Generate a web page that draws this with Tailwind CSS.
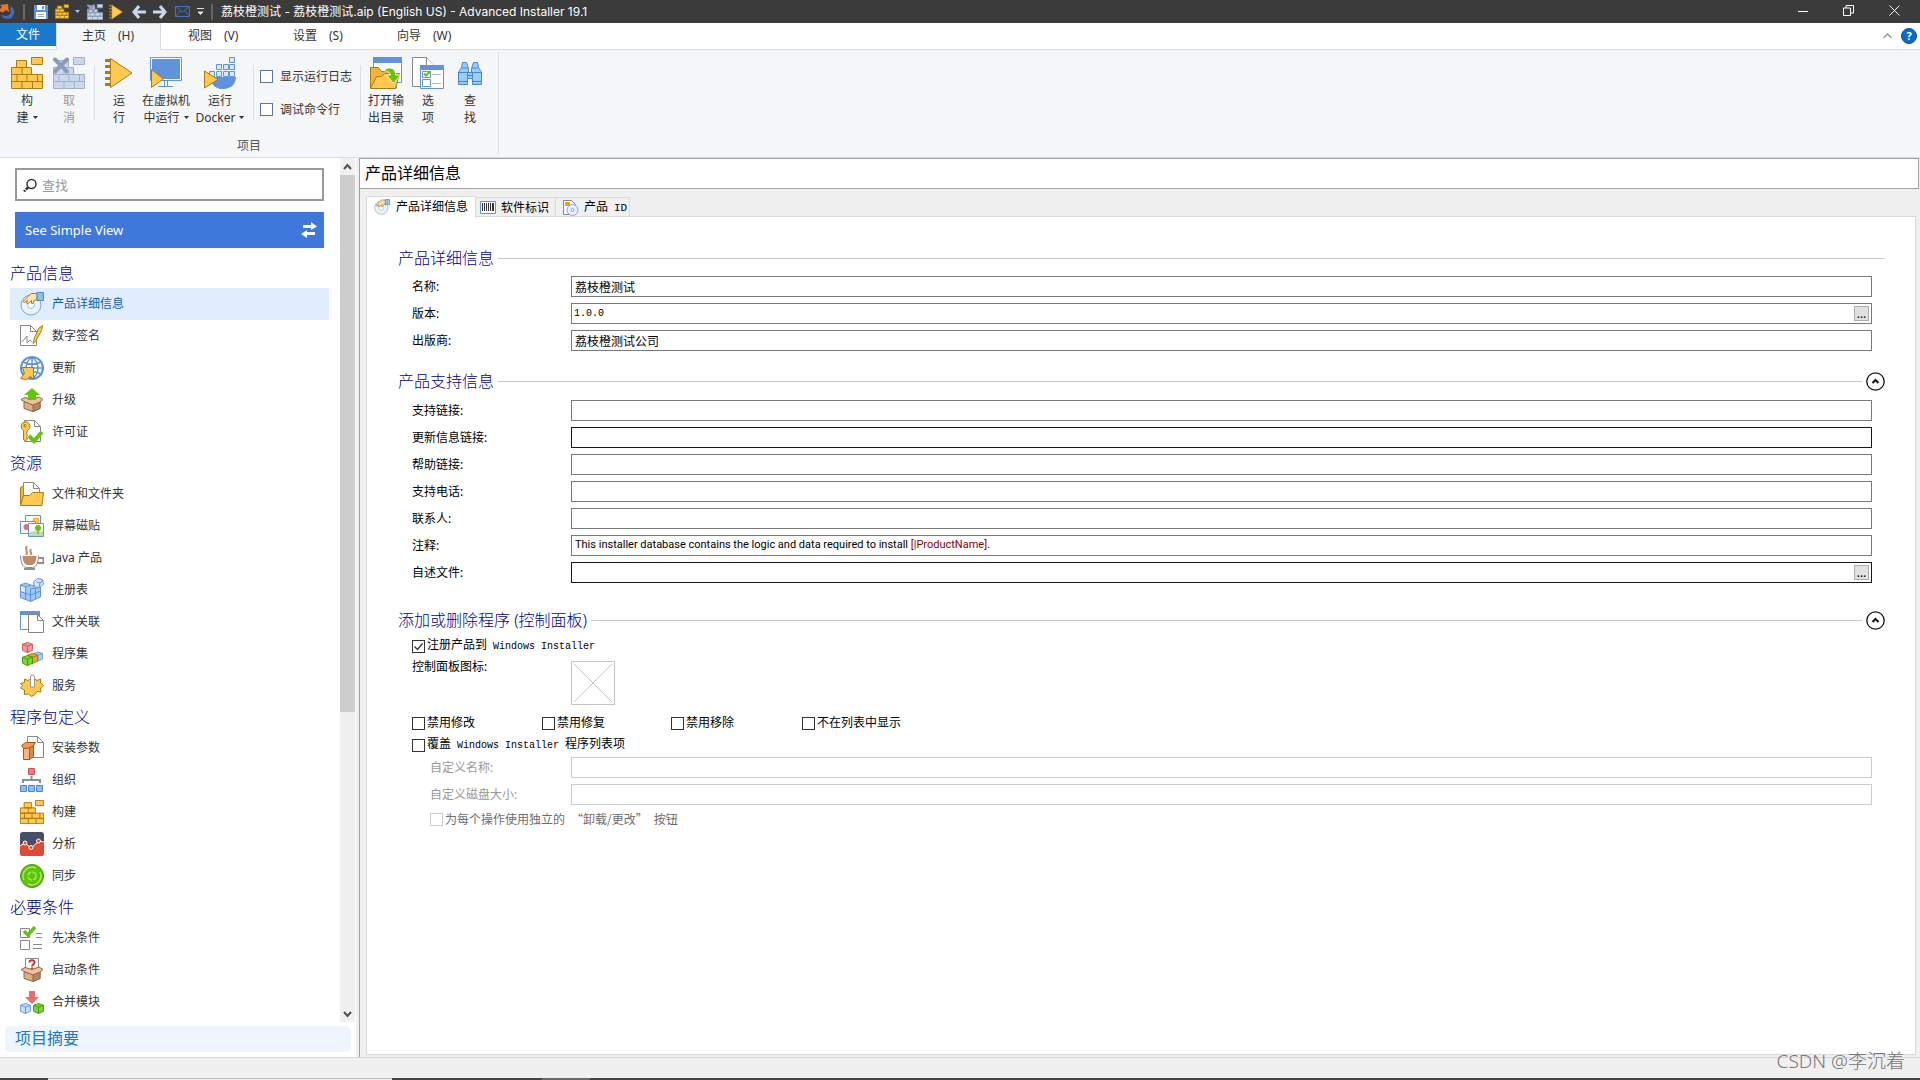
<!DOCTYPE html>
<html lang="zh-CN">
<head>
  <meta charset="UTF-8" />
  <meta name="viewport" content="width=device-width, initial-scale=1.0" />
  <title>荔枝橙测试 - Advanced Installer 19.1</title>
  <script src="https://cdn.jsdelivr.net/npm/@tailwindcss/browser@4"></script>
</head>
<body class="h-screen overflow-hidden flex flex-col bg-[#f0f0f0] text-black text-[12px] leading-4 font-['Noto_Sans','Noto_Sans_CJK_SC',sans-serif]">

  <!-- Shared icons -->
  <svg class="hidden">
    <symbol id="bricks" viewBox="0 0 32 32">
      <path d="M20.5.5h11v7h-11zM5.5 3.5h10v7h-10zM.5 10.5h20v7H.5zM.5 17.5h31v7H.5zM.5 24.5h31v7H.5zM11 10.5v7M6 17.5v7M16 17.5v7M26.5 17.5v7M11 24.5v7M21.5 24.5v7" />
    </symbol>
    <symbol id="cross" viewBox="0 0 32 32">
      <path d="M2 2.500l12 12M14 2.500l-12 12" fill="none" stroke="#8c9cb8" stroke-width="4" stroke-linecap="round" />
    </symbol>
    <symbol id="run" viewBox="0 0 32 32">
      <path d="M5.500 1.500v29l21.500-14.500z" fill="#ffc94f" stroke="#a87b14" />
      <path d="M0 3.500h5M0 9.500h5M0 15.500h5M0 21.500h5M0 27.500h5" stroke="#a87b14" stroke-width="3" />
    </symbol>
    <symbol id="disc" viewBox="0 0 24 24">
      <circle cx="11" cy="13" r="10" fill="#e9f3fd" stroke="#7da7dc" />
      <circle cx="11" cy="13" r="3.500" fill="#fff" stroke="#9dbde4" />
      <path d="M17 1.500h-6l-8 8 1.500 1 3-2-1 2.500 2 .5 3-3v3h1.500l1.500-3.500h2.500z" fill="#ffe3ae" stroke="#b07b1c" />
      <path d="M17 .5h6.500v8H17z" fill="#8fbdf3" stroke="#4c86d0" />
    </symbol>
    <symbol id="box" viewBox="0 0 24 24">
      <path d="M4 13.500l9 3 7-3v7l-7 3-9-3z" fill="#dcae82" stroke="#8d6748" />
      <path d="M13 16.500v7l7-3v-7z" fill="#b9865c" stroke="#8d6748" />
      <path d="M4 13.500l-3-2 4-2 7 2 7-2.500 4 2.500-3 2.500-7 3z" fill="#eac39c" stroke="#8d6748" />
    </symbol>
    <symbol id="cube" viewBox="0 0 12 12">
      <path d="M.5 2.500L6 .5l5.500 2v6.500L6 11.500.5 9z" />
      <path d="M.5 2.500L6 4.500l5.500-2M6 4.500v7" fill="none" />
    </symbol>
    <symbol id="caret" viewBox="0 0 5 3"><path d="M0 0h5L2.500 3z" fill="currentColor" /></symbol>
  </svg>

  <!-- Title bar -->
  <header class="h-[23px] shrink-0 flex items-center bg-[#3b3b3b] text-white">
    <svg class="w-4 h-4" viewBox="0 0 16 16"><path d="M1 11a7 7 0 0 0 13-1c1-3 0-6-3-8l-1 4c2 3-1 6-4 6-2 0-3-1-5-1z" fill="#3d6db8" /><path d="M0 1l8-1 1 8-3-2-3 2.500-3-1V5l2-2z" fill="#e8732a" /></svg>
    <div class="ml-[7px] w-[2px] h-4 border-x border-[#666]"></div>
    <button aria-label="保存" class="ml-[9px]"><svg class="w-[14px] h-[14px]" viewBox="0 0 14 14"><path d="M0 0h14v14H0z" fill="#5a93e0" /><path d="M3 0h8v5H3zM2 7h10v7H2z" fill="#fff" /><path d="M4 9.500h6M4 11.500h6" stroke="#9ab" /><path d="M8 1h2v3H8z" fill="#5a93e0" /></svg></button>
    <button aria-label="构建" class="ml-[7px]"><svg class="w-[14px] h-[15px]" fill="#ffc94f" stroke="#a87b14" stroke-width="2"><use href="#bricks" /></svg></button>
    <button aria-label="构建选项" class="ml-[6px] text-[#9cc4f5]"><svg class="w-[5px] h-[3px]"><use href="#caret" /></svg></button>
    <button aria-label="取消" class="ml-[7px]"><svg class="w-4 h-4" fill="#ccd8ea" stroke="#8c9cb8" stroke-width="2"><use href="#bricks" /><use href="#cross" /></svg></button>
    <button aria-label="运行" class="ml-[6px]"><svg class="w-4 h-4"><use href="#run" /></svg></button>
    <button aria-label="后退" class="ml-[7px]"><svg class="w-[14px] h-[14px]" viewBox="0 0 14 14"><path d="M7 1L2 7l5 6M2 7h12" fill="none" stroke="#c8d8f0" stroke-width="3" /></svg></button>
    <button aria-label="前进" class="ml-[7px]"><svg class="w-[14px] h-[14px]" viewBox="0 0 14 14"><path d="M7 1l5 6-5 6M12 7H0" fill="none" stroke="#c8d8f0" stroke-width="3" /></svg></button>
    <button aria-label="邮件" class="ml-2"><svg class="w-[15px] h-[11px]" viewBox="0 0 15 11"><path d="M.5.5h14v10H.5zM.5.5L7.500 6l7-5.500M.5 10.500l5-6M14.500 10.500l-5-6" fill="none" stroke="#3f73bd" /></svg></button>
    <button aria-label="自定义工具栏" class="ml-[7px]"><svg class="w-[7px] h-2" viewBox="0 0 7 8"><path d="M0 .5h7M1 4h5L3.500 6.500z" fill="#ddd" stroke="#ddd" stroke-width="1" /></svg></button>
    <div class="ml-[7px] w-[2px] h-4 border-x border-[#666]"></div>
    <h1 class="ml-2 flex-1 whitespace-nowrap font-['Inter','Noto_Sans_CJK_SC',sans-serif]">荔枝橙测试 - 荔枝橙测试.aip (English US) - Advanced Installer 19.1</h1>
    <div class="flex gap-[35px] pr-[20px] pb-[3px]">
      <button aria-label="最小化"><svg class="w-[11px] h-[11px]" viewBox="0 0 11 11"><path d="M1 6.500h10" stroke="#fff" /></svg></button>
      <button aria-label="还原"><svg class="w-[11px] h-[11px]" viewBox="0 0 11 11"><path d="M.5 3h7v7.500h-7zM3 3V.5h7.500V8h-3" fill="none" stroke="#fff" /></svg></button>
      <button aria-label="关闭"><svg class="w-[11px] h-[11px]" viewBox="0 0 11 11"><path d="M.5.5l10 10M10.500.5l-10 10" stroke="#fff" /></svg></button>
    </div>
  </header>

  <!-- Ribbon tabs -->
  <nav class="h-[27px] shrink-0 flex items-start bg-white border-b border-[#d9dbde] text-[#333]">
    <a href="#" class="w-[56px] h-[23px] pt-[4px] text-center bg-[#1979ca] text-white">文件</a>
    <a href="#" class="w-[105px] h-[27px] pt-[4px] pl-[25px] bg-[#f5f6f8] border-x border-t border-[#d9dbde]">主页&emsp;(H)</a>
    <a href="#" class="w-[106px] pt-[5px] pl-[27px]">视图&emsp;(V)</a>
    <a href="#" class="w-[104px] pt-[5px] pl-[26px]">设置&emsp;(S)</a>
    <a href="#" class="pt-[5px] pl-[26px]">向导&emsp;(W)</a>
    <div class="ml-auto h-[26px] pr-[3px] flex items-center gap-[9px]">
      <button aria-label="折叠功能区"><svg class="w-[9px] h-[6px]" viewBox="0 0 9 6"><path d="M.5 5l4-4 4 4" fill="none" stroke="#999" stroke-width="1.500" /></svg></button>
      <button aria-label="帮助" class="w-4 h-4 rounded-full bg-[#0a6bc9] border border-[#0b4f98] text-white text-[11px] leading-[14px] font-bold">?</button>
    </div>
  </nav>

  <!-- Ribbon -->
  <section class="h-[108px] shrink-0 flex bg-[#f5f6f8] border-b border-[#d9dbde] text-[#333] leading-[17px]">
    <div class="w-[499px] mt-[2px] mb-[3px] pt-[5px] border-r border-[#dcdee1] flex flex-col justify-between">
      <div class="flex pl-[6px] text-center">
        <button class="w-[42px]">
          <svg class="w-8 h-8 mx-auto mb-[3px]" fill="#ffc94f" stroke="#a87b14"><use href="#bricks" /></svg>
          构<br><span class="flex items-center justify-center gap-1">建<svg class="w-[5px] h-[3px]"><use href="#caret" /></svg></span>
        </button>
        <button disabled class="w-[42px] text-[#999]">
          <svg class="w-8 h-8 mx-auto mb-[3px]" fill="#ccd8ea" stroke="#9fb0cd"><use href="#bricks" /><use href="#cross" /></svg>
          取<br>消
        </button>
        <div class="ml-[4px] mt-2 w-px h-[55px] bg-[#dcdee1]"></div>
        <button class="w-[48px]">
          <svg class="w-8 h-8 mx-auto mb-[3px]"><use href="#run" x="2" /></svg>
          运<br>行
        </button>
        <button class="w-[50px] -ml-[2px] whitespace-nowrap">
          <svg class="w-8 h-8 mx-auto mb-[3px]" viewBox="0 0 32 32"><path d="M.5.5h31v23H.5z" fill="#fff" stroke="#5f93dc" /><path d="M2 2h28v20H2z" fill="#5f93dc" /><path d="M14.500 24v5M17.500 24v5M8 29.500h15" stroke="#5f93dc" /><path d="M1.500 12.500v18L13.500 22z" fill="#ffc94f" stroke="#a87b14" /></svg>
          在虚拟机<br><span class="flex items-center justify-center gap-1">中运行<svg class="w-[5px] h-[3px]"><use href="#caret" /></svg></span>
        </button>
        <button class="w-[58px]">
          <svg class="w-8 h-8 mx-auto mb-[3px]" viewBox="0 0 32 32"><path d="M5.500 14.500h5v5h-5zM12.500 14.500h5v5h-5zM19.500 14.500h5v5h-5zM25.500 14.500h5v5h-5zM12.500 7.500h5v5h-5zM19.500 7.500h5v5h-5zM25.500 7.500h5v5h-5zM25.500.5h5v5h-5z" fill="#d9e9fc" stroke="#5f93dc" /><path d="M8 20h24c0 7-5 12-13 12-5 0-9-2-11-6z" fill="#5f93dc" /><path d="M.5 14v17L14 22.500z" fill="#ffc94f" stroke="#a87b14" /></svg>
          运行<br><span class="flex items-center justify-center gap-1">Docker<svg class="w-[5px] h-[3px] shrink-0"><use href="#caret" /></svg></span>
        </button>
        <div class="mt-2 ml-1 w-px h-[55px] bg-[#dcdee1]"></div>
        <div class="w-[106px] pl-[6px] pt-[11px] flex flex-col gap-4 text-left whitespace-nowrap">
          <label class="flex items-center gap-[7px]"><input type="checkbox" class="appearance-none w-[13px] h-[13px] bg-white border border-[#5a76a8]">显示运行日志</label>
          <label class="flex items-center gap-[7px]"><input type="checkbox" class="appearance-none w-[13px] h-[13px] bg-white border border-[#5a76a8]">调试命令行</label>
        </div>
        <div class="mt-2 w-px h-[55px] bg-[#dcdee1]"></div>
        <button class="w-[42px] ml-[4px]">
          <svg class="w-8 h-8 mx-auto mb-[3px]" viewBox="0 0 32 32"><path d="M3.500.5h28v25h-28z" fill="#fff" stroke="#5f93dc" /><path d="M3 0h29v6H3z" fill="#5f93dc" /><path d="M.5 31V10.500h8l3 4h9V18L26.500 31z" fill="#f0b53a" stroke="#a87b14" /><path d="M.5 31.500l6-12h5l3-3h15l-4 15z" fill="#ffc94f" stroke="#a87b14" /><path d="M14 14c3-5 12-4 11.500 4h5l-7 8.500-7-8.500h4c0-3-3-4-6.500-4z" fill="#64c30e" stroke="#fff" stroke-width=".8" /></svg>
          打开输<br>出目录
        </button>
        <button class="w-[42px]">
          <svg class="w-8 h-8 mx-auto mb-[3px]" viewBox="0 0 32 32"><path d="M.5.5h14l7 8v21H.5z" fill="#fff" stroke="#888" /><path d="M14.500.5v8h7" fill="#fff" stroke="#888" /><path d="M8.500 8.500h23v23h-23z" fill="#fff" stroke="#5f93dc" /><path d="M8 8h24v5H8z" fill="#5f93dc" /><path d="M10.500 14.500h8v6h-8zM10.500 22.500h8v7h-8z" fill="#fff" stroke="#5f93dc" /><path d="M12 16.500l2 2 4-4" fill="none" stroke="#64c30e" stroke-width="2" /><path d="M20 17.500h9M20 26.500h9" stroke="#bbb" /></svg>
          选<br>项
        </button>
        <button class="w-[42px]">
          <svg class="w-8 h-8 mx-auto mb-[3px]" viewBox="0 0 32 32"><path d="M8.500 5.500h4l2 6v4h3v-4l2-6h4l1 5 3 5v12h-9v-6h-5v6h-9v-12l3-5z" fill="#9accff" stroke="#4a84cc" /><path d="M8 11h6M18 11h6M4.500 15.500h23M4.500 24.500h9M18.500 24.500h9M13.500 15v6M18.500 15v6M13.500 18.500h5" fill="none" stroke="#4a84cc" /></svg>
          查<br>找
        </button>
      </div>
      <div class="text-center text-[#555]">项目</div>
    </div>
  </section>

  <div class="flex-1 min-h-0 flex">
    <!-- Sidebar -->
    <aside class="w-[359px] shrink-0 flex flex-col pr-[3px]">
      <div class="flex-1 min-h-0 flex bg-white">
        <div class="w-[340px] overflow-hidden pt-[10px] pl-[10px] pr-[11px]">
          <div class="ml-[5px] mr-[5px] h-[33px] flex items-center gap-[5px] pl-[6px] border-2 border-[#999]">
            <svg class="w-[14px] h-[14px]" viewBox="0 0 14 14"><circle cx="8.500" cy="6" r="4.500" fill="none" stroke="#333" stroke-width="1.500" /><path d="M5 9.500L1 13.500" stroke="#333" stroke-width="2.500" stroke-dasharray="3 1" /></svg>
            <input type="text" aria-label="查找" placeholder="查找" class="flex-1 min-w-0 text-[13px] outline-none placeholder:text-[#999]">
          </div>
          <button class="ml-[5px] w-[309px] mt-[11px] mb-[10px] h-[36px] flex items-center justify-between pl-[10px] pr-[7px] bg-[#3e78db] text-white text-[13px]">
            See Simple View
            <svg class="w-4 h-4" viewBox="0 0 16 16"><path d="M2 3h8V0l6 4.500L10 8V6H2zM14 10H6V8L0 12l6 4v-3h8z" fill="#fff" /></svg>
          </button>

          <h2 class="h-[30px] leading-[30px] text-[16px] font-light text-[#00008b]">产品信息</h2>
          <a href="#" class="h-8 flex items-center gap-2 pl-[10px] bg-[#e0edff] text-[#0a5fb4]">
            <svg class="w-6 h-6"><use href="#disc" /></svg>产品详细信息</a>
          <a href="#" class="h-8 flex items-center gap-2 pl-[10px] text-[#333]">
            <svg class="w-6 h-6" viewBox="0 0 24 24"><path d="M.5 1.500h10l6 6v14H.5z" fill="#fff" stroke="#888" /><path d="M10.500 1.500v6h6M2 18l5-6v7l3-3 2 2" fill="none" stroke="#888" /><path d="M22.500 1.500l-4 3-5 12-.5 3 2.500-2 6-11z" fill="#ffc94f" stroke="#a87b14" /></svg>数字签名</a>
          <a href="#" class="h-8 flex items-center gap-2 pl-[10px] text-[#333]">
            <svg class="w-6 h-6" viewBox="0 0 24 24"><circle cx="12" cy="12" r="11" fill="#fff" stroke="#5f93dc" stroke-width="2" /><path d="M12 1v22M1 12h22M3 6c5 3 13 3 18 0M3 18c5-3 13-3 18 0M12 1c-8 6-8 16 0 22M12 1c8 6 8 16 0 22" fill="none" stroke="#5f93dc" stroke-width="1.500" /><path d="M2.500 11.500h11v12l-3-3-4 3-6-1 4-5z" fill="#ffc94f" stroke="#a87b14" /></svg>更新</a>
          <a href="#" class="h-8 flex items-center gap-2 pl-[10px] text-[#333]">
            <svg class="w-6 h-6" viewBox="0 0 24 24"><use href="#box" /><path d="M12 0l8 7h-4v5H8V7H4z" fill="#64c30e" /></svg>升级</a>
          <a href="#" class="h-8 flex items-center gap-2 pl-[10px] text-[#333]">
            <svg class="w-6 h-6" viewBox="0 0 24 24"><path d="M4.500.5h10l6 6v15h-16z" fill="#fff" stroke="#888" /><path d="M14.500.5v6h6" fill="none" stroke="#888" /><path d="M5 2a4.500 4.500 0 0 0-1.500 8.500v9l2 1.500 2-2-1-2 1-1.500-1-2 1-3A4.500 4.500 0 0 0 5 2zm0 2.500a1 1 0 1 1 0 2.500 1 1 0 0 1 0-2.500z" fill="#ffc94f" stroke="#a87b14" /><path d="M9 16l5 5 8-9" fill="none" stroke="#64c30e" stroke-width="4" /></svg>许可证</a>

          <h2 class="h-[30px] leading-[30px] text-[16px] font-light text-[#00008b]">资源</h2>
          <a href="#" class="h-8 flex items-center gap-2 pl-[10px] text-[#333]">
            <svg class="w-6 h-6" viewBox="0 0 24 24"><path d="M.5 23V5.500l2-1h2v14" fill="#f0b53a" stroke="#a87b14" /><path d="M3.500.5h10l6 6v10h-16z" fill="#fff" stroke="#888" /><path d="M13.500.5v6h6" fill="none" stroke="#888" /><path d="M.5 23.500l3-10h6l3-3h11l-1.500 13z" fill="#ffc94f" stroke="#a87b14" /></svg>文件和文件夹</a>
          <a href="#" class="h-8 flex items-center gap-2 pl-[10px] text-[#333]">
            <svg class="w-6 h-6" viewBox="0 0 24 24"><path d="M5.500 1.500h15v11h-15z" fill="#fff" stroke="#5f93dc" /><circle cx="16" cy="7" r="3" fill="#ffc94f" stroke="#e79a20" /><path d="M.5 7.500h15v12H.5z" fill="#fff" stroke="#5f93dc" /><circle cx="6.500" cy="13" r="3" fill="#e86c6c" /><circle cx="11" cy="12" r="2" fill="#ffc94f" /><path d="M8.500 9.500h15v13h-15z" fill="#fff" stroke="#5f93dc" /><path d="M9 19c5-3 9-2 14-1v4H9z" fill="#c4d9a4" /><path d="M18 14v6" stroke="#a87b14" /><circle cx="18" cy="14" r="3" fill="#64c30e" /></svg>屏幕磁贴</a>
          <a href="#" class="h-8 flex items-center gap-2 pl-[10px] text-[#333]">
            <svg class="w-6 h-6" viewBox="0 0 24 24"><path d="M7 0c-3 4 2 5-1 9M11 3c-2 3 1 3 0 6" fill="none" stroke="#c08a6a" stroke-width="2" /><path d="M.5 9.500c0 6 2 12 6 12h6c4 0 6-6 6-12" fill="#fff" stroke="#888" /><path d="M2.500 10h14c0 5-2 9-5 9h-4c-3 0-5-4-5-9z" fill="#c08a6a" /><path d="M19 12h4.500v5H17M4 23h11" fill="none" stroke="#8a8f96" stroke-width="2" /></svg>Java 产品</a>
          <a href="#" class="h-8 flex items-center gap-2 pl-[10px] text-[#333]">
            <svg class="w-6 h-6" viewBox="0 0 24 24"><path d="M.5 7l5-2 5 2 10 2v10l-10 4.500-10-4z" fill="#9fc8f7" stroke="#5f93dc" /><path d="M.5 7l5 2v12M10.500 7l-5 2M.5 13.500l10 3.500 10-4M10.500 11v12.500M10.500 11l10-2M15.500 10v11" fill="none" stroke="#5f93dc" /><path d="M1 8l4 1.500v5L1 13z" fill="#e1effd" /><path d="M13.500 4l4-3.500 5 1 1 4.500-4 4-5-1z" fill="#cfe4fb" stroke="#5f93dc" /><path d="M17 4l3 1 3-3M20 5l-1 5" fill="none" stroke="#5f93dc" /></svg>注册表</a>
          <a href="#" class="h-8 flex items-center gap-2 pl-[10px] text-[#333]">
            <svg class="w-6 h-6" viewBox="0 0 24 24"><path d="M.5 1.500h19v18H.5z" fill="#fff" stroke="#5f93dc" /><path d="M0 1h20v4H0z" fill="#5f93dc" /><path d="M8.500 4.500h9l6 6v12h-15z" fill="#fff" stroke="#888" /><path d="M17.500 4.500v6h6" fill="none" stroke="#888" /></svg>文件关联</a>
          <a href="#" class="h-8 flex items-center gap-2 pl-[10px] text-[#333]">
            <svg class="w-6 h-6" viewBox="0 0 24 24"><use href="#cube" x="2" width="11" height="11" fill="#f49a9a" stroke="#d05252" /><use href="#cube" x="13" y="9" width="10" height="11" fill="#a9cffa" stroke="#5f93dc" /><use href="#cube" x="7" y="11" width="11" height="11" fill="#f6a12c" stroke="#b9700f" /><use href="#cube" x="2" y="13" width="11" height="11" fill="#7fd331" stroke="#3f9606" /></svg>程序集</a>
          <a href="#" class="h-8 flex items-center gap-2 pl-[10px] text-[#333]">
            <svg class="w-6 h-6" viewBox="0 0 24 24"><path d="M4.500 5l3.500 1.500 2-1.500h5l2 1.500L20.500 5v4l3 2.500-3 2.500.5 4-4-.5-2 3-3.500 2-3-2.500-4 .5V16l-4-2 2-2.500L.5 9.500l4-1z" fill="#ffc94f" stroke="#a87b14" /><path d="M10.500 13V3a2 2 0 0 1 4 0v10z" fill="#fff" stroke="#999" /></svg>服务</a>

          <h2 class="h-[30px] leading-[30px] text-[16px] font-light text-[#00008b]">程序包定义</h2>
          <a href="#" class="h-8 flex items-center gap-2 pl-[10px] text-[#333]">
            <svg class="w-6 h-6" viewBox="0 0 24 24"><path d="M7.500.5h10l6 6v15h-16z" fill="#fff" stroke="#888" /><path d="M17.500.5v6h6" fill="none" stroke="#888" /><path d="M3.500 11.500h6v12h-6z" fill="#f6b67c" stroke="#a8561a" /><path d="M9.500 11.500l4-3v12l-4 3z" fill="#d98a4a" stroke="#a8561a" /><path d="M1.500 9.500l4-3h10l-2 3-4 2.500-6 .5z" fill="#f19a4f" stroke="#a8561a" /></svg>安装参数</a>
          <a href="#" class="h-8 flex items-center gap-2 pl-[10px] text-[#333]">
            <svg class="w-6 h-6" viewBox="0 0 24 24"><path d="M8.500.5h6v6h-6z" fill="#f77" stroke="#d05252" /><path d="M11.500 8v4M3 15v-3h17v3" fill="none" stroke="#8a8f96" stroke-width="2" /><path d="M.5 17.500h6v6h-6zM8.500 17.500h6v6h-6zM16.500 17.500h6v6h-6z" fill="#8fbdf3" stroke="#4c86d0" /></svg>组织</a>
          <a href="#" class="h-8 flex items-center gap-2 pl-[10px] text-[#333]">
            <svg class="w-6 h-6" fill="#ffc94f" stroke="#a87b14" stroke-width="1.300"><use href="#bricks" /></svg>构建</a>
          <a href="#" class="h-8 flex items-center gap-2 pl-[10px] text-[#333]">
            <svg class="w-6 h-6" viewBox="0 0 24 24"><rect width="24" height="24" rx="3" fill="#474f68" /><path d="M0 13l5-2 6 5 8-7 5 2v10a3 3 0 0 1-3 3H3a3 3 0 0 1-3-3z" fill="#de4b35" /><path d="M0 14l5-3 6 5 8-7 5 1" fill="none" stroke="#fff" /><g fill="#de4b35" stroke="#fff"><circle cx="5" cy="11" r="2" /><circle cx="11" cy="15.500" r="2" /><circle cx="18.500" cy="9" r="2" /></g></svg>分析</a>
          <a href="#" class="h-8 flex items-center gap-2 pl-[10px] text-[#333]">
            <svg class="w-6 h-6" viewBox="0 0 24 24"><circle cx="12" cy="12" r="11.500" fill="#5fc406" stroke="#3f9606" /><g fill="none" stroke="#a5e76a" stroke-width="1.500"><path d="M4 16a9 9 0 0 1 12-12M20 8A9 9 0 0 1 8 20" /><circle cx="12" cy="12" r="4" stroke-dasharray="5 1.300" /></g></svg>同步</a>

          <h2 class="h-[30px] leading-[30px] text-[16px] font-light text-[#00008b]">必要条件</h2>
          <a href="#" class="h-8 flex items-center gap-2 pl-[10px] text-[#333]">
            <svg class="w-6 h-6" viewBox="0 0 24 24"><path d="M.5 2.500h9v9h-9zM.5 14.500h9v9h-9zM16 7.500h6M16 11.500h6M13 18.500h9M13 22.500h9" fill="none" stroke="#888" /><path d="M4 5l4 4 7-8" fill="none" stroke="#64c30e" stroke-width="3.500" /></svg>先决条件</a>
          <a href="#" class="h-8 flex items-center gap-2 pl-[10px] text-[#333]">
            <svg class="w-6 h-6" viewBox="0 0 24 24"><path d="M5.500.5h13v12h-13z" fill="#fff" stroke="#888" /><use href="#box" /><path d="M9.500 4.500c0-3 5-3 5 0 0 2-2.500 2-2.500 4M12 9.500V11" fill="none" stroke="#d9322e" stroke-width="2" /></svg>启动条件</a>
          <a href="#" class="h-8 flex items-center gap-2 pl-[10px] text-[#333]">
            <svg class="w-6 h-6" viewBox="0 0 24 24"><path d="M9 1h6v6h4l-7 7-7-7h4z" fill="#ea6c6c" /><use href="#cube" y="13" width="11" height="11" fill="#c4defb" stroke="#5f93dc" /><use href="#cube" x="13" y="13" width="11" height="11" fill="#7fd331" stroke="#3f9606" /></svg>合并模块</a>
        </div>
        <!-- Scroll bar -->
        <div class="w-[15px] mb-[36px] flex flex-col items-center bg-[#f0f0f0]">
          <svg class="w-[9px] h-[17px]" viewBox="0 0 9 17"><path d="M1 11l3.500-4L8 11" fill="none" stroke="#505050" stroke-width="2" /></svg>
          <div class="w-full h-[537px] bg-[#cdcdcd]"></div>
          <svg class="mt-auto w-[9px] h-[17px]" viewBox="0 0 9 17"><path d="M1 7l3.500 4L8 7" fill="none" stroke="#505050" stroke-width="2" /></svg>
        </div>
      </div>
      <div class="-mt-[32px] pb-[5px] pl-[5px] pr-[5px] bg-white">
        <a href="#" class="block h-[26px] leading-[25px] pl-[10px] rounded-[5px] bg-[#eef5fd] text-[16px] text-[#1979ca]">项目摘要</a>
      </div>
    </aside>

    <!-- Product details -->
    <main class="flex-1 min-w-0 flex flex-col border-l border-[#a0a0a0] pr-px">
      <h2 class="h-[31px] shrink-0 pl-[5px] leading-[28px] text-[16px] bg-white border-y border-r border-[#a0a0a0]">产品详细信息</h2>

      <div class="flex-1 min-h-0 flex flex-col pt-[6px] pl-[6px] pr-[3px] pb-[2px]">
        <div role="tablist" class="h-[22px] shrink-0 flex items-end relative z-10 whitespace-nowrap">
          <button role="tab" aria-selected="true" class="w-[110px] h-[22px] pb-[2px] -mb-px flex items-center gap-[6px] pl-[7px] bg-white border-x border-t border-[#dadada]">
            <svg class="w-4 h-4"><use href="#disc" /></svg>产品详细信息</button>
          <button role="tab" class="w-[80px] h-[20px] flex items-center gap-[5px] pl-[4px] border-r border-t border-[#dadada]">
            <svg class="w-4 h-[13px]" viewBox="0 0 16 13"><path d="M.5.5h15v12H.5z" fill="#fff" stroke="#5f93dc" /><path d="M2.500 2v8M4.500 2v8M6.500 2v8M8.500 2v8M10.500 2v8M12.500 2v8M13.500 2v8" stroke="#333" /></svg>软件标识</button>
          <button role="tab" class="w-[74px] h-[20px] flex items-center gap-[5px] pl-[7px] border-r border-t border-[#dadada]">
            <svg class="w-4 h-4" viewBox="0 0 16 16"><path d="M.5.5h8l4 4v10H.5z" fill="#fff" stroke="#888" /><path d="M2 2h5v4H2z" fill="#e9a21f" /><circle cx="9.500" cy="10" r="5.500" fill="#e9f3fd" stroke="#7da7dc" /><circle cx="9.500" cy="10" r="1.500" fill="#fff" stroke="#7da7dc" /></svg><span>产品&ensp;<span class="font-['Liberation_Mono',monospace] text-[11px]">ID</span></span></button>
        </div>

        <form class="flex-1 min-h-0 -mt-px flex flex-col pt-[31px] pl-[31px] pr-[30px] bg-white border border-[#dadada]">
          <h3 class="h-5 flex items-center gap-1 leading-5 text-[16px] font-light text-[#00008b]">产品详细信息<span class="flex-1 h-px bg-[#c8c8c8]"></span></h3>
          <div class="pt-[8px] pl-[14px] pr-[13px] flex flex-col gap-[6px]">
            <div class="flex items-center"><label for="name" class="w-[159px]">名称:</label><input id="name" type="text" value="荔枝橙测试" class="flex-1 h-[21px] px-[3px] border border-[#7a7a7a]"></div>
            <div class="flex items-center"><label for="version" class="w-[159px]">版本:</label>
              <div class="flex-1 h-[21px] flex items-center pr-[2px] border border-[#7a7a7a]"><input id="version" type="text" value="1.0.0" class="flex-1 h-[19px] px-[2px] outline-none font-['Liberation_Mono',monospace] text-[10px]"><button type="button" aria-label="编辑版本" class="w-[15px] h-[15px] leading-[12px] bg-[#e1e1e1] border border-[#adadad]">...</button></div>
            </div>
            <div class="flex items-center"><label for="publisher" class="w-[159px]">出版商:</label><input id="publisher" type="text" value="荔枝橙测试公司" class="flex-1 h-[21px] px-[3px] border border-[#7a7a7a]"></div>
          </div>

          <h3 class="mt-[20px] h-5 flex items-center gap-1 leading-5 text-[16px] font-light text-[#00008b]">产品支持信息<span class="flex-1 h-px bg-[#c8c8c8]"></span>
            <button type="button" aria-label="折叠产品支持信息"><svg class="w-[19px] h-[19px]" viewBox="0 0 19 19"><circle cx="9.500" cy="9.500" r="8.700" fill="#fff" stroke="#111" stroke-width="1.300" /><path d="M6.500 11l3-3 3 3" fill="none" stroke="#111" stroke-width="2" /></svg></button></h3>
          <div class="pt-[9px] pl-[14px] pr-[13px] flex flex-col gap-[6px]">
            <div class="flex items-center"><label for="support" class="w-[159px]">支持链接:</label><input id="support" type="text" class="flex-1 h-[21px] px-1 border border-[#7a7a7a]"></div>
            <div class="flex items-center"><label for="update" class="w-[159px]">更新信息链接:</label><input id="update" type="text" class="flex-1 h-[21px] px-1 border border-[#171717]"></div>
            <div class="flex items-center"><label for="help" class="w-[159px]">帮助链接:</label><input id="help" type="text" class="flex-1 h-[21px] px-1 border border-[#7a7a7a]"></div>
            <div class="flex items-center"><label for="phone" class="w-[159px]">支持电话:</label><input id="phone" type="text" class="flex-1 h-[21px] px-1 border border-[#7a7a7a]"></div>
            <div class="flex items-center"><label for="contact" class="w-[159px]">联系人:</label><input id="contact" type="text" class="flex-1 h-[21px] px-1 border border-[#7a7a7a]"></div>
            <div class="flex items-center"><span id="comments" class="w-[159px]">注释:</span><div role="textbox" contenteditable="true" aria-labelledby="comments" class="flex-1 h-[21px] px-[3px] leading-[18px] border border-[#7a7a7a] font-['Roboto',sans-serif] text-[11px]">This installer database contains the logic and data required to install <span class="text-[#8b0000]">[|ProductName]</span>.</div></div>
            <div class="flex items-center"><label for="readme" class="w-[159px]">自述文件:</label>
              <div class="flex-1 h-[21px] flex items-center pr-[2px] border border-[#171717]"><input id="readme" type="text" class="flex-1 h-[19px] px-1 outline-none"><button type="button" aria-label="浏览自述文件" class="w-[15px] h-[15px] leading-[12px] bg-[#e1e1e1] border border-[#adadad]">...</button></div>
            </div>
          </div>

          <h3 class="mt-[27px] h-5 flex items-center gap-1 leading-5 text-[16px] font-light text-[#00008b]">添加或删除程序 (控制面板)<span class="flex-1 h-px bg-[#c8c8c8]"></span>
            <button type="button" aria-label="折叠添加或删除程序"><svg class="w-[19px] h-[19px]" viewBox="0 0 19 19"><circle cx="9.500" cy="9.500" r="8.700" fill="#fff" stroke="#111" stroke-width="1.300" /><path d="M6.500 11l3-3 3 3" fill="none" stroke="#111" stroke-width="2" /></svg></button></h3>
          <div class="pt-[8px] pl-[14px] pr-[13px]">
            <label class="h-4 flex items-center gap-[2px]">
              <span class="grid w-[13px] h-[13px]"><input type="checkbox" checked class="peer col-start-1 row-start-1 appearance-none w-[13px] h-[13px] border border-[#333]"><svg class="col-start-1 row-start-1 w-[13px] h-[13px] pointer-events-none invisible peer-checked:visible" viewBox="0 0 13 13"><path d="M2.500 6.500l3 3 5-6" fill="none" stroke="#333" stroke-width="1.300" /></svg></span>
              <span>注册产品到&ensp;<span class="font-['Liberation_Mono',monospace] text-[10px]">Windows Installer</span></span></label>
            <div class="mt-[7px] flex items-start"><span class="w-[159px] -mt-[2px]">控制面板图标:</span>
              <svg class="w-[44px] h-[44px]" viewBox="0 0 44 44"><path d="M.5.5h43v43H.5zM3 3l38 38M41 3L3 41" fill="none" stroke="#c4c4c4" /></svg></div>
            <div class="mt-[10px] flex">
              <label class="w-[130px] flex items-center gap-[2px]"><input type="checkbox" class="appearance-none w-[13px] h-[13px] border border-[#333]">禁用修改</label>
              <label class="w-[129px] flex items-center gap-[2px]"><input type="checkbox" class="appearance-none w-[13px] h-[13px] border border-[#333]">禁用修复</label>
              <label class="w-[131px] flex items-center gap-[2px]"><input type="checkbox" class="appearance-none w-[13px] h-[13px] border border-[#333]">禁用移除</label>
              <label class="flex items-center gap-[2px]"><input type="checkbox" class="appearance-none w-[13px] h-[13px] border border-[#333]">不在列表中显示</label>
            </div>
            <label class="mt-[6px] h-4 flex items-center gap-[2px]"><input type="checkbox" class="appearance-none w-[13px] h-[13px] border border-[#333]"><span>覆盖&ensp;<span class="font-['Liberation_Mono',monospace] text-[10px]">Windows Installer</span>&ensp;程序列表项</span></label>
            <div class="mt-[4px] pl-[18px] flex flex-col gap-[6px] text-[#999]">
              <div class="flex items-center"><label for="custom-name" class="w-[141px]">自定义名称:</label><input id="custom-name" type="text" disabled class="flex-1 h-[21px] px-1 border border-[#ccc]"></div>
              <div class="flex items-center"><label for="custom-size" class="w-[141px]">自定义磁盘大小:</label><input id="custom-size" type="text" disabled class="flex-1 h-[21px] px-1 border border-[#ccc]"></div>
              <label class="flex items-center gap-[2px] text-[#6d6d6d]"><input type="checkbox" disabled class="appearance-none w-[13px] h-[13px] border border-[#ccc]"><span class="font-['Noto_Sans_CJK_SC',sans-serif]">为每个操作使用独立的&ensp;“卸载/更改”&ensp;按钮</span></label>
            </div>
          </div>
        </form>
      </div>
    </main>
  </div>

  <!-- Status bar -->
  <footer class="h-[23px] shrink-0 relative flex flex-col justify-end border-t border-[#d9d9d9] bg-[#f0f0f0]">
    <div class="h-[2px] flex bg-[#444]">
      <div class="w-[344px] ml-[48px] bg-[#f0f0f0] border-t border-[#bbb]"></div>
      <div class="w-[48px] ml-[150px] bg-[#6a6a6a]"></div>
    </div>
    <span class="absolute right-[15px] -top-[9px] leading-6 text-[19px] font-light text-[#777] whitespace-nowrap">CSDN @李沉着</span>
  </footer>
</body>
</html>
